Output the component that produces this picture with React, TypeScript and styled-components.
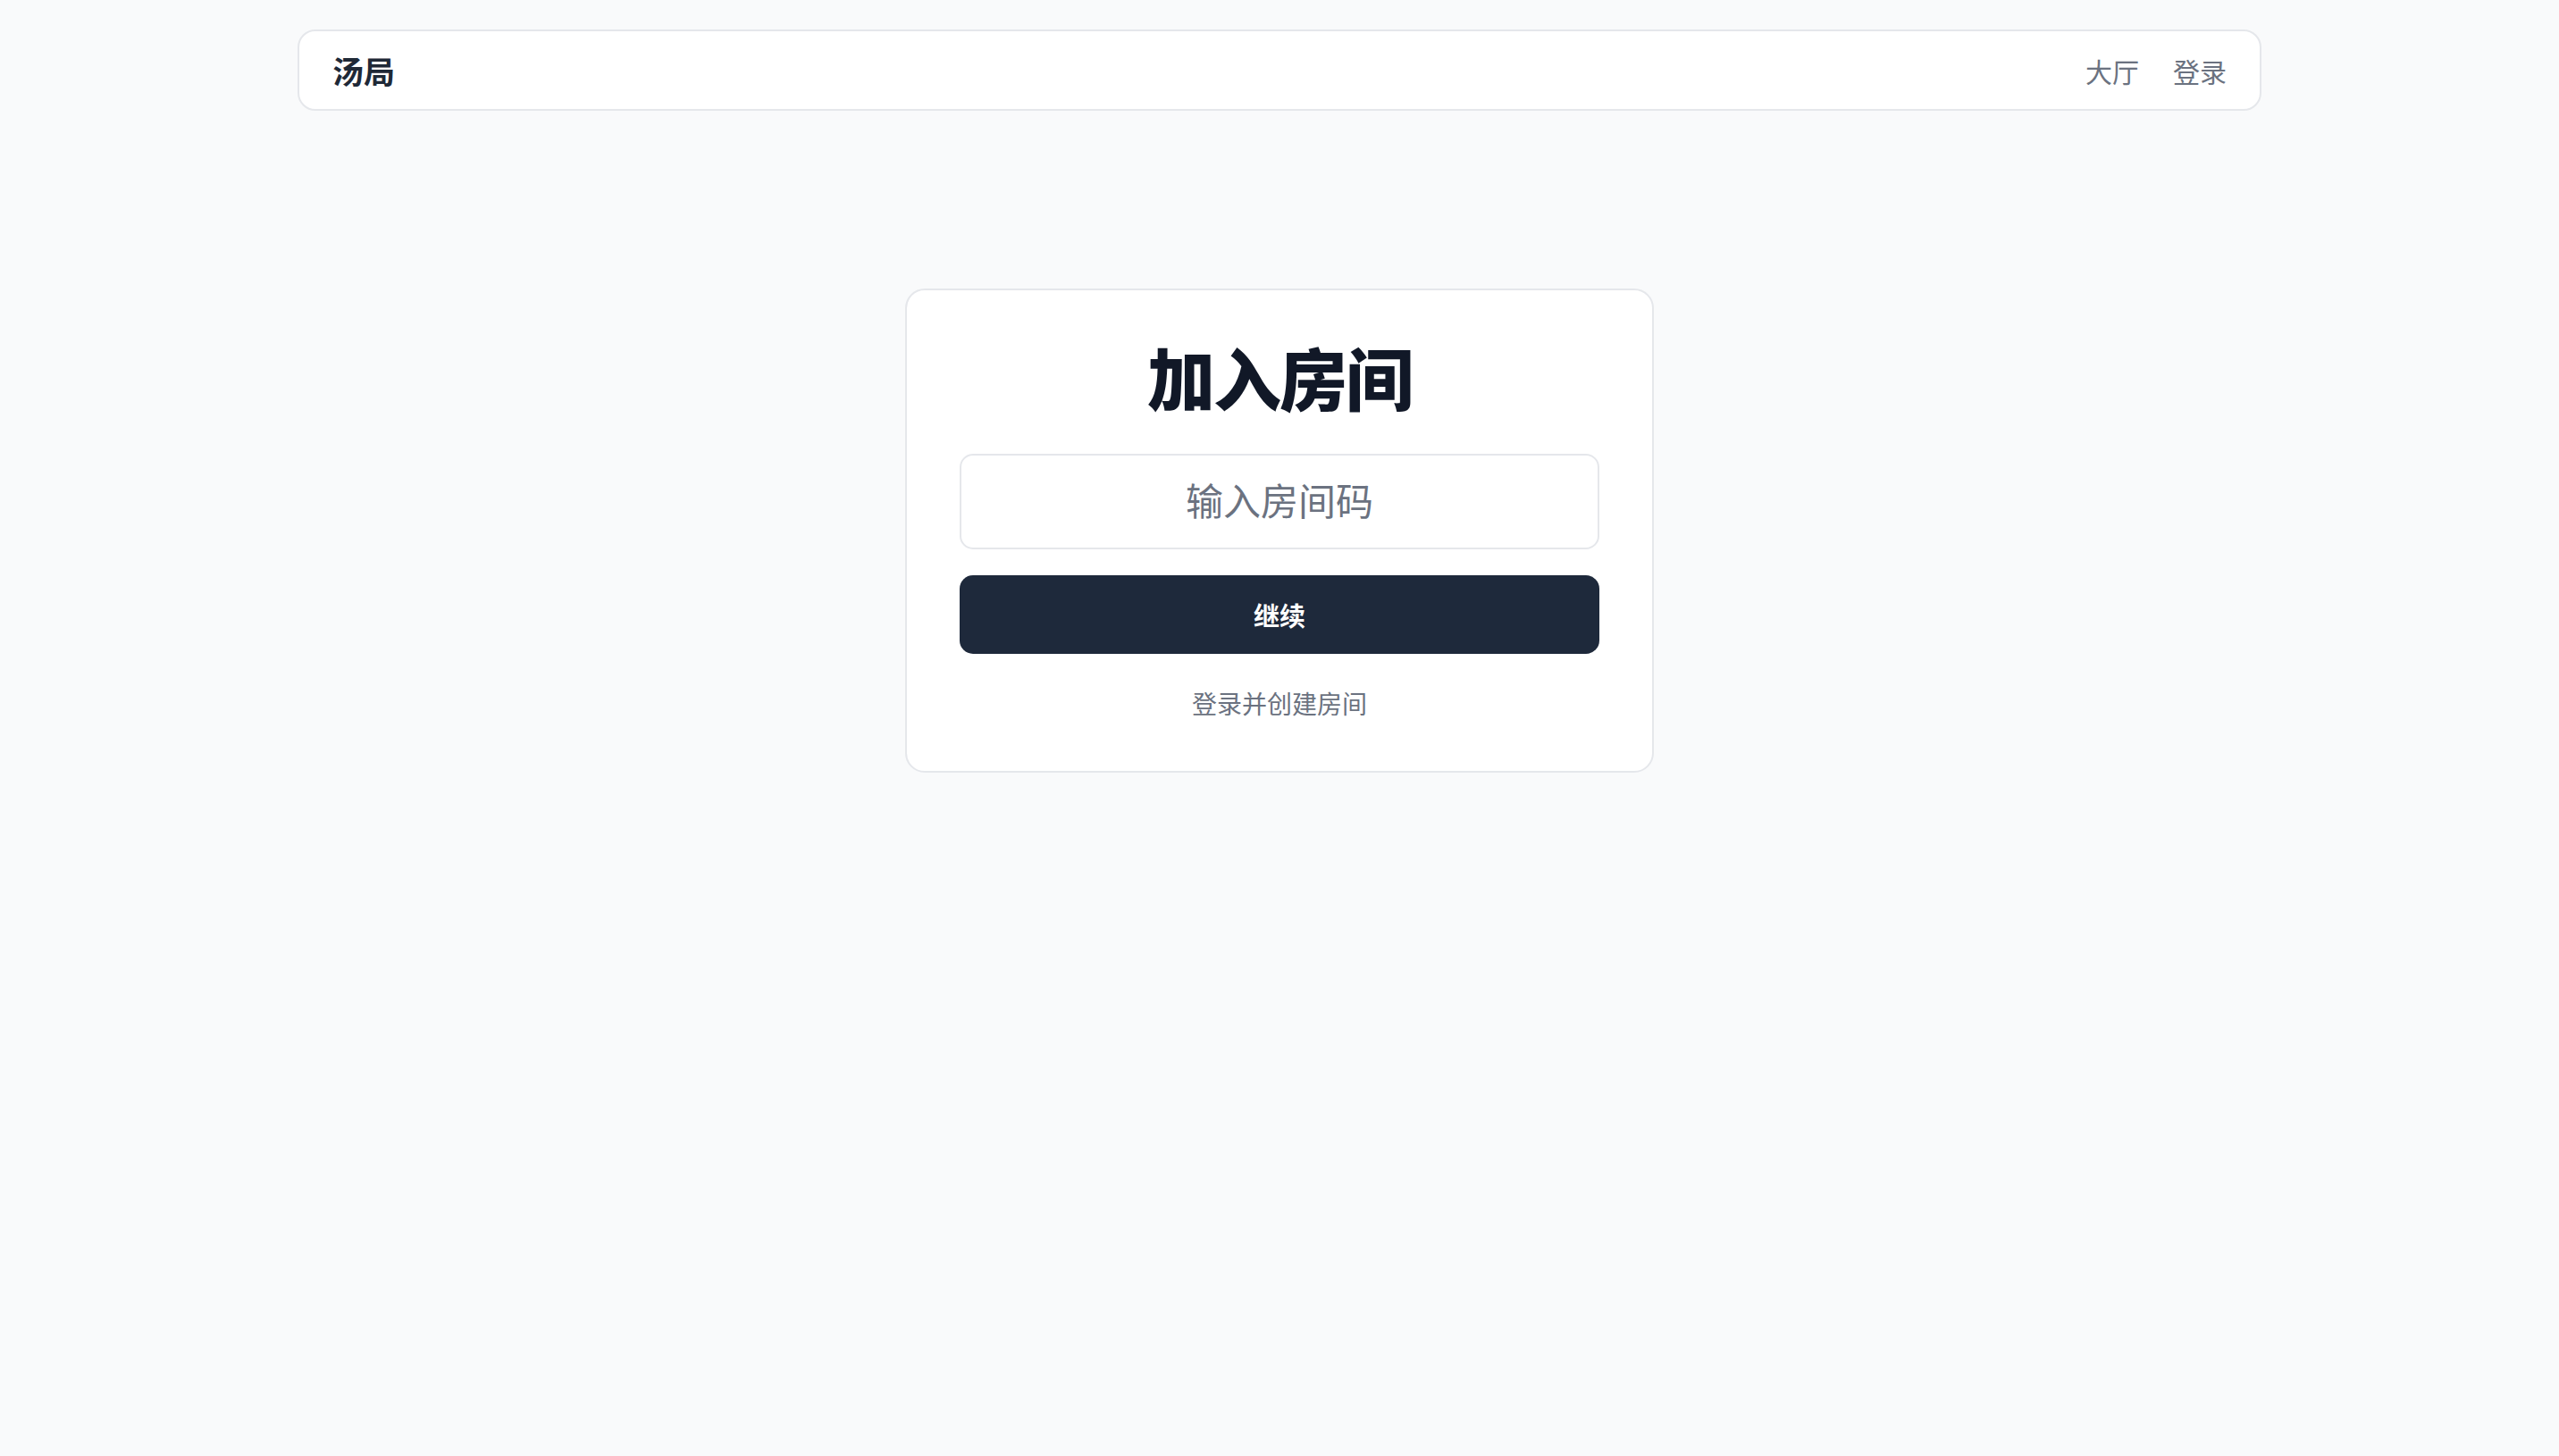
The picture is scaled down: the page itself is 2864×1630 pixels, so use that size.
import styled, { createGlobalStyle } from "styled-components";

const GlobalStyle = createGlobalStyle`
  html, body {
    margin: 0;
    padding: 0;
    background-color: #f9fafb;
  }
  body {
    font-family: Inter, "Noto Sans CJK SC", sans-serif;
    color: #111827;
  }
  * {
    box-sizing: border-box;
  }
`;

const Page = styled.div`
  min-height: 1630px;
  display: flex;
  flex-direction: column;
  align-items: center;
  padding-top: 33px;
`;

const NavBar = styled.nav`
  width: 2198px;
  height: 91px;
  display: flex;
  align-items: center;
  justify-content: space-between;
  padding: 0 37px;
  background-color: #ffffff;
  border: 2px solid #e5e7eb;
  border-radius: 20px;
`;

const Logo = styled.div`
  font-size: 35px;
  font-weight: 700;
  color: #1f2937;
`;

const NavLinks = styled.div`
  display: flex;
  align-items: center;
  gap: 38px;
`;

const NavLink = styled.a`
  font-size: 30px;
  color: #6b7280;
  text-decoration: none;
  cursor: pointer;
`;

const Card = styled.main`
  margin-top: 199px;
  width: 838px;
  padding: 59px 59px 53px;
  display: flex;
  flex-direction: column;
  align-items: stretch;
  background-color: #ffffff;
  border: 2px solid #e5e7eb;
  border-radius: 22px;
`;

const Title = styled.h1`
  margin: 4px 0 44px;
  font-size: 76px;
  line-height: 1;
  font-weight: 900;
  text-align: center;
  color: #111827;
  letter-spacing: -2px;
`;

const CodeInput = styled.input`
  height: 107px;
  width: 100%;
  border: 2px solid #e5e7eb;
  border-radius: 15px;
  background-color: #ffffff;
  font-family: inherit;
  font-size: 42px;
  text-align: center;
  color: #111827;
  outline: none;
  &::placeholder {
    color: #6b7280;
  }
`;

const ContinueButton = styled.button`
  margin-top: 29px;
  height: 88px;
  width: 100%;
  border: 0;
  border-radius: 15px;
  background-color: #1e293b;
  color: #ffffff;
  font-family: inherit;
  font-size: 29px;
  font-weight: 700;
  cursor: pointer;
`;

const CreateLink = styled.a`
  margin-top: 36px;
  font-size: 28px;
  line-height: 1.5;
  color: #6b7280;
  text-align: center;
  text-decoration: none;
  cursor: pointer;
`;

export default function App() {
  return (
    <>
      <GlobalStyle />
      <Page>
        <NavBar>
          <Logo>汤局</Logo>
          <NavLinks>
            <NavLink>大厅</NavLink>
            <NavLink>登录</NavLink>
          </NavLinks>
        </NavBar>
        <Card>
          <Title>加入房间</Title>
          <CodeInput type="text" placeholder="输入房间码" />
          <ContinueButton>继续</ContinueButton>
          <CreateLink>登录并创建房间</CreateLink>
        </Card>
      </Page>
    </>
  );
}
